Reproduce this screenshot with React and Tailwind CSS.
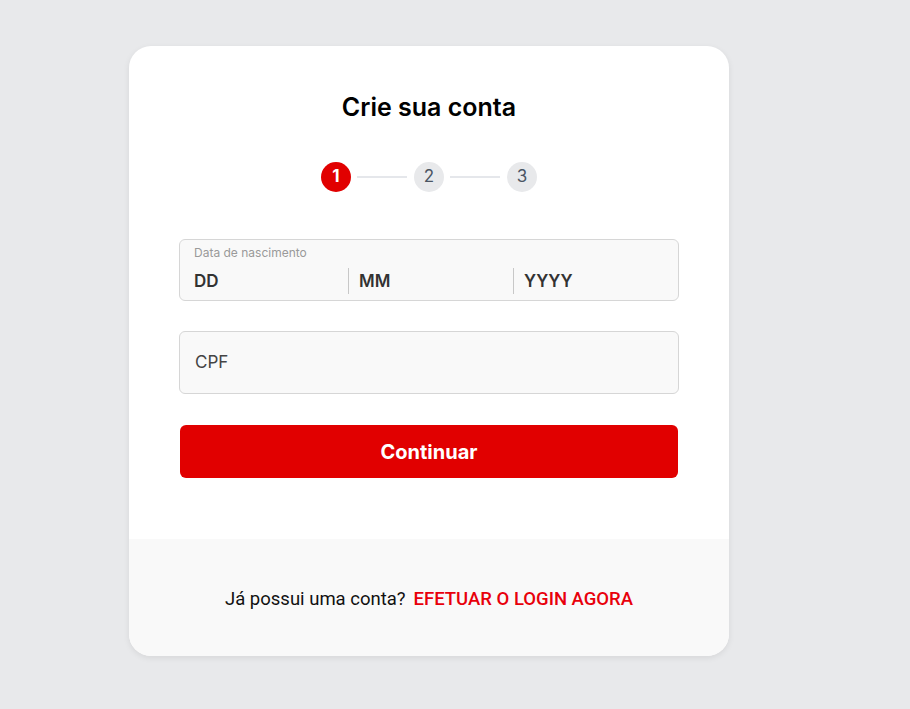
import React from 'react';

function Step({ n, active }) {
  return (
    <div
      className={`w-[30px] h-[30px] rounded-full flex items-center justify-center text-[17px] ${
        active ? 'bg-[#e10000] text-white font-bold' : 'bg-[#e8e9eb] text-[#4b5563]'
      }`}
    >
      {n}
    </div>
  );
}

export default function App() {
  return (
    <div className="min-h-screen bg-[#e8e9eb] pt-[46px] font-['Inter',sans-serif]">
      <div className="ml-[129px] w-[600px] h-[610px] bg-white rounded-[22px] overflow-hidden shadow-[0_2px_6px_rgba(0,0,0,0.08)] flex flex-col">
        <div className="h-[493px] px-[50px] flex flex-col">
          <h1 className="mt-[45px] text-center text-[25px] leading-[32px] font-semibold text-black">Crie sua conta</h1>

          {/* stepper */}
          <div className="mt-[39px] flex items-center justify-center">
            <Step n={1} active />
            <div className="ml-[6px] mr-[7px] w-[50px] h-[2px] bg-[#e5e7eb]" />
            <Step n={2} />
            <div className="ml-[6px] mr-[7px] w-[50px] h-[2px] bg-[#e5e7eb]" />
            <Step n={3} />
          </div>

          {/* data de nascimento */}
          <div className="mt-[47px] h-[62px] rounded-[6px] border border-[#d6d6d6] bg-[#f9f9f9] pl-[14px] pt-[5px]">
            <div className="text-[12px] leading-[16px] text-[#9a9a9a]">Data de nascimento</div>
            <div className="mt-[7px] flex items-center text-[17px] font-semibold text-[#333]">
              <div className="w-[154px] leading-[26px]">DD</div>
              <div className="w-px h-[26px] bg-[#c8c8c8]" />
              <div className="w-[164px] pl-[10px] leading-[26px]">MM</div>
              <div className="w-px h-[26px] bg-[#c8c8c8]" />
              <div className="pl-[10px] leading-[26px]">YYYY</div>
            </div>
          </div>

          {/* CPF */}
          <div className="mt-[30px] h-[63px] rounded-[6px] border border-[#d6d6d6] bg-[#f9f9f9] pl-[15px] flex items-center text-[17px] text-[#444]">
            CPF
          </div>

          <button className="mt-[31px] mx-[1px] h-[53px] rounded-[6px] bg-[#e10000] text-white text-[20px] font-bold">
            Continuar
          </button>
        </div>

        <div className="flex-1 bg-[#f9f9f9] flex items-center justify-center pt-[4px] font-['Roboto',sans-serif] text-[18.5px]">
          <span className="text-[#111]">Já possui uma conta?</span>
          <span className="ml-[8px] text-[#e8000b] font-medium">EFETUAR O LOGIN AGORA</span>
        </div>
      </div>
    </div>
  );
}
